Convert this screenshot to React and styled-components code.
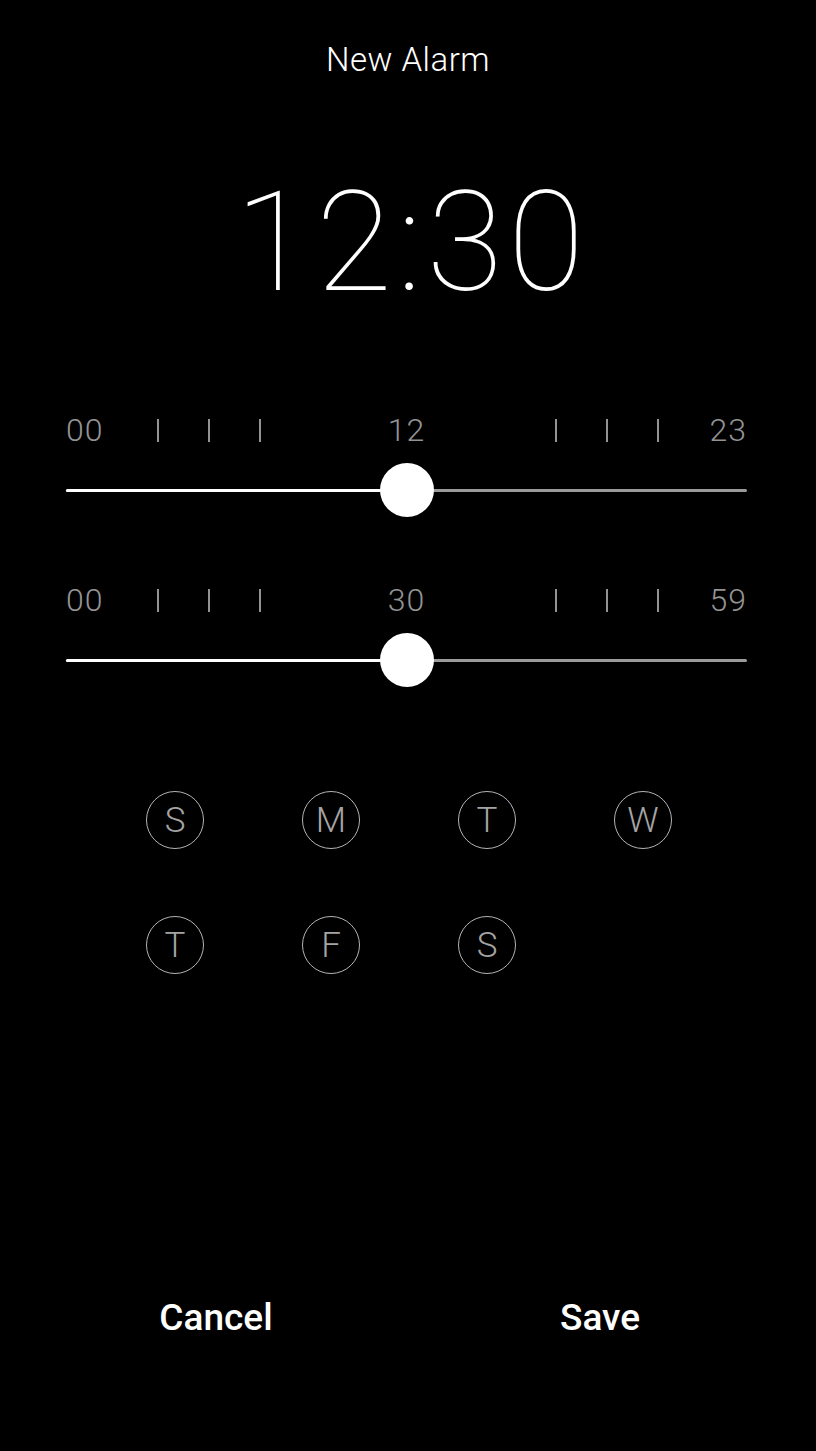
import React, { useState } from "react";
import styled, { createGlobalStyle } from "styled-components";

const GlobalStyle = createGlobalStyle`
  html, body {
    margin: 0;
    padding: 0;
    background: #000;
  }
  body {
    font-family: Roboto, "Liberation Sans", sans-serif;
    color: #fff;
  }
`;

const DAYS = ["S", "M", "T", "W", "T", "F", "S"];

function TickGroup() {
  return (
    <Ticks>
      <Tick />
      <Tick />
      <Tick />
    </Ticks>
  );
}

function TimeSlider({ min, mid, max, value, total, onChange }) {
  const pct = (value / total) * 100;
  return (
    <SliderBlock>
      <LabelRow>
        <LeftCell>
          <Label>{min}</Label>
          <TickGroup />
        </LeftCell>
        <Label>{mid}</Label>
        <RightCell>
          <TickGroup />
          <Label>{max}</Label>
        </RightCell>
      </LabelRow>
      <TrackArea onClick={onChange}>
        <Track>
          <Fill style={{ width: `${pct}%` }} />
          <Thumb style={{ left: `${pct}%` }} />
        </Track>
      </TrackArea>
    </SliderBlock>
  );
}

export default function App() {
  const [hour] = useState(12);
  const [minute] = useState(30);
  const [selected, setSelected] = useState([]);

  const toggle = (i) =>
    setSelected((s) => (s.includes(i) ? s.filter((x) => x !== i) : [...s, i]));

  return (
    <Screen>
      <GlobalStyle />
      <Title>New Alarm</Title>
      <Clock>
        {String(hour).padStart(2, "0")}:{String(minute).padStart(2, "0")}
      </Clock>

      <Sliders>
        <TimeSlider min="00" mid="12" max="23" value={50} total={100} />
        <TimeSlider min="00" mid="30" max="59" value={50} total={100} />
      </Sliders>

      <DayGrid>
        {DAYS.map((d, i) => (
          <DayButton key={i} $active={selected.includes(i)} onClick={() => toggle(i)}>
            {d}
          </DayButton>
        ))}
      </DayGrid>

      <Footer>
        <ActionButton>Cancel</ActionButton>
        <ActionButton>Save</ActionButton>
      </Footer>
    </Screen>
  );
}

const Screen = styled.div`
  width: 816px;
  min-height: 1451px;
  background: #000;
  display: flex;
  flex-direction: column;
`;

const Title = styled.h1`
  margin: 42px 0 0;
  font-size: 33px;
  line-height: 36px;
  font-weight: 300;
  letter-spacing: 0.5px;
  text-align: center;
  color: #fff;
`;

const Clock = styled.div`
  margin-top: 97px;
  padding-left: 8px;
  font-size: 139px;
  line-height: 136px;
  font-weight: 100;
  text-align: center;
  letter-spacing: 5px;
  color: #fff;
`;

const Sliders = styled.div`
  margin-top: 103px;
  padding: 0 69px 0 66px;
  display: flex;
  flex-direction: column;
  gap: 67px;
`;

const SliderBlock = styled.div`
  display: flex;
  flex-direction: column;
  gap: 17px;
`;

const LabelRow = styled.div`
  display: grid;
  grid-template-columns: 1fr auto 1fr;
  align-items: center;
  height: 32px;
`;

const LeftCell = styled.div`
  display: flex;
  align-items: center;
  gap: 53px;
`;

const RightCell = styled.div`
  display: flex;
  align-items: center;
  justify-content: flex-end;
  gap: 51px;
`;

const Label = styled.span`
  font-size: 32px;
  line-height: 32px;
  font-weight: 300;
  letter-spacing: 1px;
  color: #939393;
`;

const Ticks = styled.div`
  display: flex;
  gap: 49px;
`;

const Tick = styled.span`
  width: 2px;
  height: 23px;
  background: #939393;
`;

const TrackArea = styled.div`
  height: 54px;
  display: flex;
  align-items: center;
  cursor: pointer;
`;

const Track = styled.div`
  position: relative;
  flex: 1;
  height: 3px;
  border-radius: 2px;
  background: #9a9a9a;
`;

const Fill = styled.div`
  height: 100%;
  border-radius: 2px;
  background: #fff;
`;

const Thumb = styled.div`
  position: absolute;
  top: 50%;
  width: 54px;
  height: 54px;
  border-radius: 50%;
  background: #fff;
  transform: translate(-50%, -50%);
`;

const DayGrid = styled.div`
  margin-top: 104px;
  display: grid;
  grid-template-columns: repeat(4, 156px);
  justify-content: center;
  justify-items: center;
  row-gap: 67px;
  padding-left: 2px;
`;

const DayButton = styled.button`
  width: 58px;
  height: 58px;
  border-radius: 50%;
  border: 1.5px solid ${(p) => (p.$active ? "#fff" : "#b4b4b4")};
  background: transparent;
  color: ${(p) => (p.$active ? "#fff" : "#a4a4a4")};
  font-family: Roboto, "Liberation Sans", sans-serif;
  font-size: 35px;
  font-weight: 300;
  display: flex;
  align-items: center;
  justify-content: center;
  padding: 0;
  cursor: pointer;
`;

const Footer = styled.div`
  margin-top: 323px;
  display: grid;
  grid-template-columns: 1fr 1fr;
  padding: 0 24px;
`;

const ActionButton = styled.button`
  background: none;
  border: none;
  color: #fff;
  font-family: Roboto, "Liberation Sans", sans-serif;
  font-size: 37px;
  font-weight: 500;
  line-height: 40px;
  cursor: pointer;
  text-align: center;
`;
